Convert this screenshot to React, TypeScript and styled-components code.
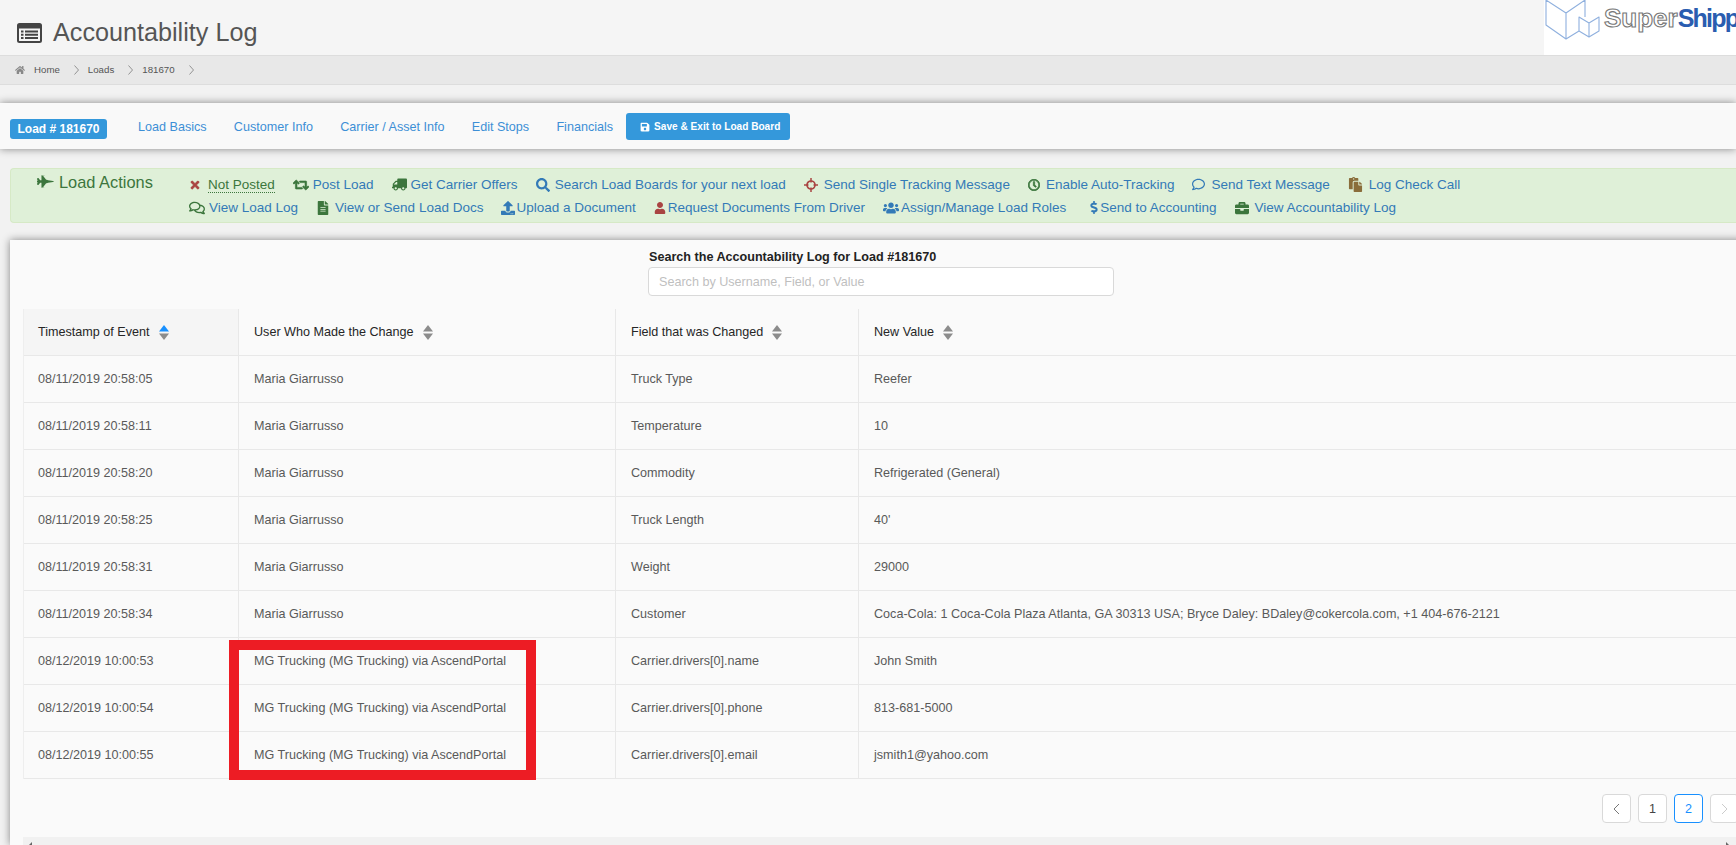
import React from 'react';
import styled, { createGlobalStyle } from 'styled-components';
import {
  FaBriefcase,
  FaDollarSign,
  FaFileAlt,
  FaFighterJet,
  FaHome,
  FaPaste,
  FaRegClock,
  FaRegComment,
  FaRegComments,
  FaRetweet,
  FaSave,
  FaSearch,
  FaTimes,
  FaTruck,
  FaUpload,
  FaUser,
  FaUsers,
} from 'react-icons/fa';

const GREEN = '#3c763d';
const RED = '#a94442';
const BLUE = '#337ab7';
const BROWN = '#8a6d3b';

const Crosshair = ({ size, color }: { size?: number; color?: string }) => (
  <svg width={size} height={size} viewBox="0 0 14 14" fill="none" stroke={color}>
    <circle cx="7" cy="7" r="4" strokeWidth="1.7" />
    <path d="M7 0v4.500M7 9.500V14M0 7h4.500M9.500 7H14" strokeWidth="1.5" />
  </svg>
);

const actionRows = [
  [
    { icon: FaTimes, color: RED, cell: 19, size: 12, bold: 20, label: 'Not Posted', status: true },
    { icon: FaRetweet, color: GREEN, cell: 20, size: 16, bold: 25, label: 'Post Load' },
    { icon: FaTruck, color: GREEN, cell: 19, size: 15, label: 'Get Carrier Offers', flip: true },
    { icon: FaSearch, color: BLUE, cell: 19, size: 14, label: 'Search Load Boards for your next load' },
    { icon: Crosshair, color: RED, cell: 20, size: 14, label: 'Send Single Tracking Message' },
    { icon: FaRegClock, color: GREEN, cell: 18, size: 12, bold: 30, label: 'Enable Auto-Tracking' },
    { icon: FaRegComment, color: BLUE, cell: 19, size: 13, label: 'Send Text Message' },
    { icon: FaPaste, color: BROWN, cell: 21, size: 15, label: 'Log Check Call' },
  ],
  [
    { icon: FaRegComments, color: GREEN, cell: 20, size: 16, label: 'View Load Log' },
    { icon: FaFileAlt, color: GREEN, cell: 19, size: 14, label: 'View or Send Load Docs' },
    { icon: FaUpload, color: BLUE, cell: 15, size: 14, label: 'Upload a Document' },
    { icon: FaUser, color: RED, cell: 14, size: 12, label: 'Request Documents From Driver' },
    { icon: FaUsers, color: BLUE, cell: 18, size: 16, label: 'Assign/Manage Load Roles' },
    { icon: FaDollarSign, color: BLUE, cell: 16, size: 13, inset: 4, label: 'Send to Accounting' },
    { icon: FaBriefcase, color: GREEN, cell: 20, size: 14, label: 'View Accountability Log' },
  ],
];

const navLinks = ['Load Basics', 'Customer Info', 'Carrier / Asset Info', 'Edit Stops', 'Financials'];

const columns = [
  { title: 'Timestamp of Event', width: 215, active: true },
  { title: 'User Who Made the Change', width: 377 },
  { title: 'Field that was Changed', width: 243 },
  { title: 'New Value', width: 881 },
];

const maria = 'Maria Giarrusso';
const portal = 'MG Trucking (MG Trucking) via AscendPortal';

const logRows = [
  ['08/11/2019 20:58:05', maria, 'Truck Type', 'Reefer'],
  ['08/11/2019 20:58:11', maria, 'Temperature', '10'],
  ['08/11/2019 20:58:20', maria, 'Commodity', 'Refrigerated (General)'],
  ['08/11/2019 20:58:25', maria, 'Truck Length', "40'"],
  ['08/11/2019 20:58:31', maria, 'Weight', '29000'],
  ['08/11/2019 20:58:34', maria, 'Customer', 'Coca-Cola: 1 Coca-Cola Plaza Atlanta, GA 30313 USA; Bryce Daley: BDaley@cokercola.com, +1 404-676-2121'],
  ['08/12/2019 10:00:53', portal, 'Carrier.drivers[0].name', 'John Smith'],
  ['08/12/2019 10:00:54', portal, 'Carrier.drivers[0].phone', '813-681-5000'],
  ['08/12/2019 10:00:55', portal, 'Carrier.drivers[0].email', 'jsmith1@yahoo.com'],
];

const ListIcon = () => (
  <TitleSvg viewBox="0 0 25 20">
    <path
      fill="#444"
      fillRule="evenodd"
      d="M2.5 0H22.5a2.5 2.5 0 0 1 2.5 2.5V17.5a2.5 2.5 0 0 1-2.5 2.5H2.5a2.5 2.5 0 0 1-2.5-2.5V2.5A2.5 2.5 0 0 1 2.5 0ZM2 5.5V17.5a.5.5 0 0 0 .5.5H22.500a.5.5 0 0 0 .5-.5V5.500Z"
    />
    <path fill="#444" d="M4 7.500h2.500v2H4ZM8 7.500h13v2H8ZM4 10.800h2.500v2H4ZM8 10.800h13v2H8ZM4 14h2.500v2H4ZM8 14h13v2H8Z" />
  </TitleSvg>
);

const Chevron = () => (
  <ChevronSvg viewBox="0 0 5 10">
    <path d="M.5.5 4.500 5 .5 9.500" fill="none" stroke="#888" strokeWidth="0.9" />
  </ChevronSvg>
);

const SortCarets = ({ active }: { active?: boolean }) => (
  <SortSvg viewBox="0 0 10 15">
    <path d="M5 0 10 6.500H0Z" fill={active ? '#1890ff' : '#8c8c8c'} />
    <path d="M5 15 10 8.500H0Z" fill="#8c8c8c" />
  </SortSvg>
);

const LogoMark = () => (
  <LogoSvg viewBox="0 0 58 42">
    <path
      d="M2 0 22 13 41 0V17M2 0V25L22 39 35 31M22 13V39M35 17 45 23 55 17V31L45 37 35 31ZM45 23V37"
      fill="none"
      stroke="#8fb0de"
      strokeWidth="1.1"
      strokeLinejoin="round"
    />
  </LogoSvg>
);

export default function App() {
  return (
    <Page>
      <GlobalStyle />
      <TitleBar>
        <TitleGroup>
          <ListIcon />
          <Title>Accountability Log</Title>
        </TitleGroup>
        <LogoBox>
          <LogoMark />
          <LogoSuper>Super</LogoSuper>
          <LogoShipper>Shipper</LogoShipper>
        </LogoBox>
      </TitleBar>

      <Breadcrumbs>
        <HomeIcon size={10} />
        <Crumb>Home</Crumb>
        <Chevron />
        <Crumb>Loads</Crumb>
        <Chevron />
        <Crumb>181670</Crumb>
        <Chevron />
      </Breadcrumbs>

      <NavBar>
        <LoadBadge>Load # 181670</LoadBadge>
        <NavLinks>
          {navLinks.map((link) => (
            <NavLink key={link}>{link}</NavLink>
          ))}
        </NavLinks>
        <SaveButton>
          <FaSave size={10} />
          Save &amp; Exit to Load Board
        </SaveButton>
      </NavBar>

      <ActionsPanel>
        <ActionsHeading>
          <FaFighterJet size={17} />
          Load Actions
        </ActionsHeading>
        <ActionRows>
          {actionRows.map((row, rowIndex) => (
            <ActionRow key={rowIndex}>
              {row.map((item) => {
                const Icon = item.icon;
                return (
                  <Action key={item.label}>
                    <ActionIcon $cell={item.cell} $inset={item.inset} $flip={item.flip}>
                      {item.bold ? (
                        <Icon size={item.size} color={item.color} stroke={item.color} strokeWidth={item.bold} />
                      ) : (
                        <Icon size={item.size} color={item.color} />
                      )}
                    </ActionIcon>
                    {item.status ? <StatusText>{item.label}</StatusText> : <ActionLink>{item.label}</ActionLink>}
                  </Action>
                );
              })}
            </ActionRow>
          ))}
        </ActionRows>
      </ActionsPanel>

      <Card>
        <SearchBlock>
          <SearchLabel>Search the Accountability Log for Load #181670</SearchLabel>
          <SearchInput placeholder="Search by Username, Field, or Value" readOnly />
        </SearchBlock>

        <TableWrap>
          <LogTable>
            <colgroup>
              {columns.map((col) => (
                <col key={col.title} width={col.width} />
              ))}
            </colgroup>
            <thead>
              <tr>
                {columns.map((col) => (
                  <HeadCell key={col.title} $active={col.active}>
                    <HeadInner>
                      {col.title}
                      <SortCarets active={col.active} />
                    </HeadInner>
                  </HeadCell>
                ))}
              </tr>
            </thead>
            <tbody>
              {logRows.map((row) => (
                <tr key={row[0]}>
                  {row.map((value, i) => (
                    <BodyCell key={i}>{value}</BodyCell>
                  ))}
                </tr>
              ))}
            </tbody>
          </LogTable>
          <Highlight />
        </TableWrap>

        <Pagination>
          <PageButton>
            <PageArrow viewBox="0 0 7 12">
              <path d="M6 1 1 6l5 5" fill="none" stroke="#777" strokeWidth="1" />
            </PageArrow>
          </PageButton>
          <PageButton>1</PageButton>
          <PageButton $current>2</PageButton>
          <PageButton>
            <PageArrow viewBox="0 0 7 12">
              <path d="M1 1l5 5-5 5" fill="none" stroke="#ccc" strokeWidth="1" />
            </PageArrow>
          </PageButton>
        </Pagination>

        <ScrollTrack>
          <ScrollArrow $side="left" />
          <ScrollArrow $side="right" />
        </ScrollTrack>
      </Card>
    </Page>
  );
}

const GlobalStyle = createGlobalStyle`
  html, body {
    margin: 0;
    padding: 0;
    overflow: hidden;
    background: #f2f2f2;
  }
  * {
    box-sizing: border-box;
  }
`;

const Page = styled.div`
  width: 1736px;
  height: 845px;
  overflow: hidden;
  background: #f2f2f2;
  font-family: 'Liberation Sans', Arial, sans-serif;
`;

const TitleBar = styled.header`
  display: flex;
  justify-content: space-between;
  height: 56px;
  background: #f5f5f5;
  border-bottom: 1px solid #ddd;
`;

const TitleGroup = styled.div`
  display: flex;
  align-items: center;
  gap: 11px;
  padding: 10px 0 0 17px;
`;

const TitleSvg = styled.svg`
  width: 25px;
  height: 20px;
`;

const Title = styled.h1`
  margin: 0;
  font-size: 25.2px;
  font-weight: 400;
  color: #555;
`;

const LogoBox = styled.div`
  display: flex;
  align-items: flex-start;
  width: 192px;
  height: 55px;
  background: #fff;
  overflow: hidden;
  white-space: nowrap;
`;

const LogoSvg = styled.svg`
  flex: none;
  width: 58px;
  height: 42px;
  margin-right: 2px;
`;

const LogoSuper = styled.span`
  font-size: 26px;
  line-height: 36px;
  font-weight: 700;
  color: #fff;
  -webkit-text-stroke: 1.1px #777;
`;

const LogoShipper = styled.span`
  font-size: 25px;
  line-height: 36px;
  font-weight: 700;
  letter-spacing: -1.8px;
  color: #2a5db0;
`;

const Breadcrumbs = styled.nav`
  display: flex;
  align-items: center;
  height: 29px;
  padding: 0 0 1px 15px;
  background: #e8e8e8;
  border-bottom: 1px solid #ddd;
`;

const HomeIcon = styled(FaHome)`
  margin-right: 9px;
  color: #888;
`;

const Crumb = styled.span`
  font-size: 9.7px;
  color: #555;
`;

const ChevronSvg = styled.svg`
  width: 5px;
  height: 10px;
  margin: 0 9px 0 14px;
`;

const NavBar = styled.div`
  display: flex;
  align-items: center;
  height: 46px;
  margin-top: 18px;
  padding-left: 10px;
  background: #f9f9f9;
  box-shadow: 0 0 8px rgba(0, 0, 0, 0.45);
`;

const LoadBadge = styled.span`
  display: flex;
  align-items: center;
  justify-content: center;
  width: 97px;
  height: 20px;
  margin-top: 6px;
  border-radius: 3px;
  background: #3498db;
  color: #fff;
  font-size: 12px;
  font-weight: 700;
`;

const NavLinks = styled.div`
  display: flex;
  gap: 27.25px;
  margin: 1px 13px 0 31px;
`;

const NavLink = styled.a`
  font-size: 12.6px;
  color: #3d8fd6;
`;

const SaveButton = styled.button`
  display: flex;
  align-items: center;
  gap: 4px;
  width: 164px;
  height: 27px;
  margin-top: 1px;
  padding: 0 0 0 14px;
  border: none;
  border-radius: 3px;
  background: #3498db;
  color: #fff;
  font-family: inherit;
  font-size: 10.1px;
  font-weight: 700;
`;

const ActionsPanel = styled.section`
  display: grid;
  grid-template-columns: 152px 1fr;
  height: 55px;
  margin: 19px 0 0 10px;
  padding: 4px 0 0 26px;
  border: 1px solid #d6e9c6;
  border-right: none;
  border-radius: 4px 0 0 4px;
  background: #dff0d8;
`;

const ActionsHeading = styled.div`
  display: flex;
  align-items: flex-start;
  gap: 5px;
  font-size: 16.4px;
  line-height: 18px;
  color: ${GREEN};
`;

const ActionRows = styled.div`
  display: flex;
  flex-direction: column;
`;

const ActionRow = styled.div`
  display: flex;
  gap: 18px;
  height: 23px;
`;

const Action = styled.div`
  display: flex;
  align-items: center;
  font-size: 13.5px;
  white-space: nowrap;
`;

const ActionIcon = styled.span<{ $cell: number; $inset?: number; $flip?: boolean }>`
  display: flex;
  flex: none;
  align-items: center;
  width: ${({ $cell }) => $cell}px;
  padding-left: ${({ $inset }) => $inset ?? 0}px;
  svg {
    transform: ${({ $flip }) => ($flip ? 'scaleX(-1)' : 'none')};
  }
`;

const ActionLink = styled.a`
  color: ${BLUE};
`;

const StatusText = styled.span`
  color: ${GREEN};
  border-bottom: 1px dotted ${GREEN};
  line-height: 15px;
`;

const Card = styled.main`
  width: 1742px;
  height: 605px;
  margin: 17px 0 0 10px;
  padding: 10px 13px 0;
  background: #fafafa;
  box-shadow: 0 0 8px rgba(0, 0, 0, 0.45);
`;

const SearchBlock = styled.div`
  display: flex;
  flex-direction: column;
  gap: 3px;
  width: 466px;
  margin: 0 auto;
`;

const SearchLabel = styled.label`
  padding-left: 1px;
  font-size: 12.6px;
  line-height: 14px;
  font-weight: 700;
  color: #222;
`;

const SearchInput = styled.input`
  height: 29px;
  padding: 0 10px;
  border: 1px solid #d9d9d9;
  border-radius: 4px;
  background: #fff;
  outline: none;
  font-family: inherit;
  font-size: 12.6px;
  &::placeholder {
    color: #bfbfbf;
  }
`;

const TableWrap = styled.div`
  position: relative;
  margin-top: 13px;
`;

const LogTable = styled.table`
  width: 1716px;
  table-layout: fixed;
  border-collapse: separate;
  border-spacing: 0;
  border-left: 1px solid #eee;
  font-size: 12.6px;
`;

const HeadCell = styled.th<{ $active?: boolean }>`
  height: 47px;
  padding: 0 0 0 15px;
  text-align: left;
  font-weight: 400;
  color: #262626;
  background: ${({ $active }) => ($active ? '#f5f5f5' : '#fafafa')};
  border-right: 1px solid #e8e8e8;
  border-bottom: 1px solid #e8e8e8;
  &:first-child {
    padding-left: 14px;
  }
`;

const HeadInner = styled.span`
  display: flex;
  align-items: center;
  gap: 9px;
`;

const SortSvg = styled.svg`
  width: 10px;
  height: 15px;
`;

const BodyCell = styled.td`
  height: 47px;
  padding: 0 0 0 15px;
  color: #595959;
  border-right: 1px solid #e8e8e8;
  border-bottom: 1px solid #e8e8e8;
  white-space: nowrap;
  &:first-child {
    padding-left: 14px;
  }
`;

const Highlight = styled.div`
  position: absolute;
  top: 331px;
  left: 206px;
  width: 307px;
  height: 140px;
  border: 10px solid #ed1c24;
`;

const Pagination = styled.div`
  display: flex;
  justify-content: flex-end;
  gap: 7px;
  margin-top: 15px;
`;

const PageButton = styled.div<{ $current?: boolean }>`
  display: flex;
  align-items: center;
  justify-content: center;
  width: 29px;
  height: 29px;
  border: 1px solid ${({ $current }) => ($current ? '#1890ff' : '#d9d9d9')};
  border-radius: 4px;
  background: #fff;
  font-size: 12.6px;
  color: ${({ $current }) => ($current ? '#1890ff' : '#444')};
`;

const PageArrow = styled.svg`
  width: 7px;
  height: 12px;
`;

const ScrollTrack = styled.div`
  position: relative;
  width: 1713px;
  height: 17px;
  margin-top: 14px;
  background: #f1f1f1;
`;

const ScrollArrow = styled.span<{ $side: 'left' | 'right' }>`
  position: absolute;
  top: 5px;
  ${({ $side }) => ($side === 'left' ? 'left: 5px;' : 'right: 6px;')}
  width: 0;
  height: 0;
  border-top: 4px solid transparent;
  border-bottom: 4px solid transparent;
  ${({ $side }) => ($side === 'left' ? 'border-right: 4px solid #666;' : 'border-left: 4px solid #666;')}
`;
